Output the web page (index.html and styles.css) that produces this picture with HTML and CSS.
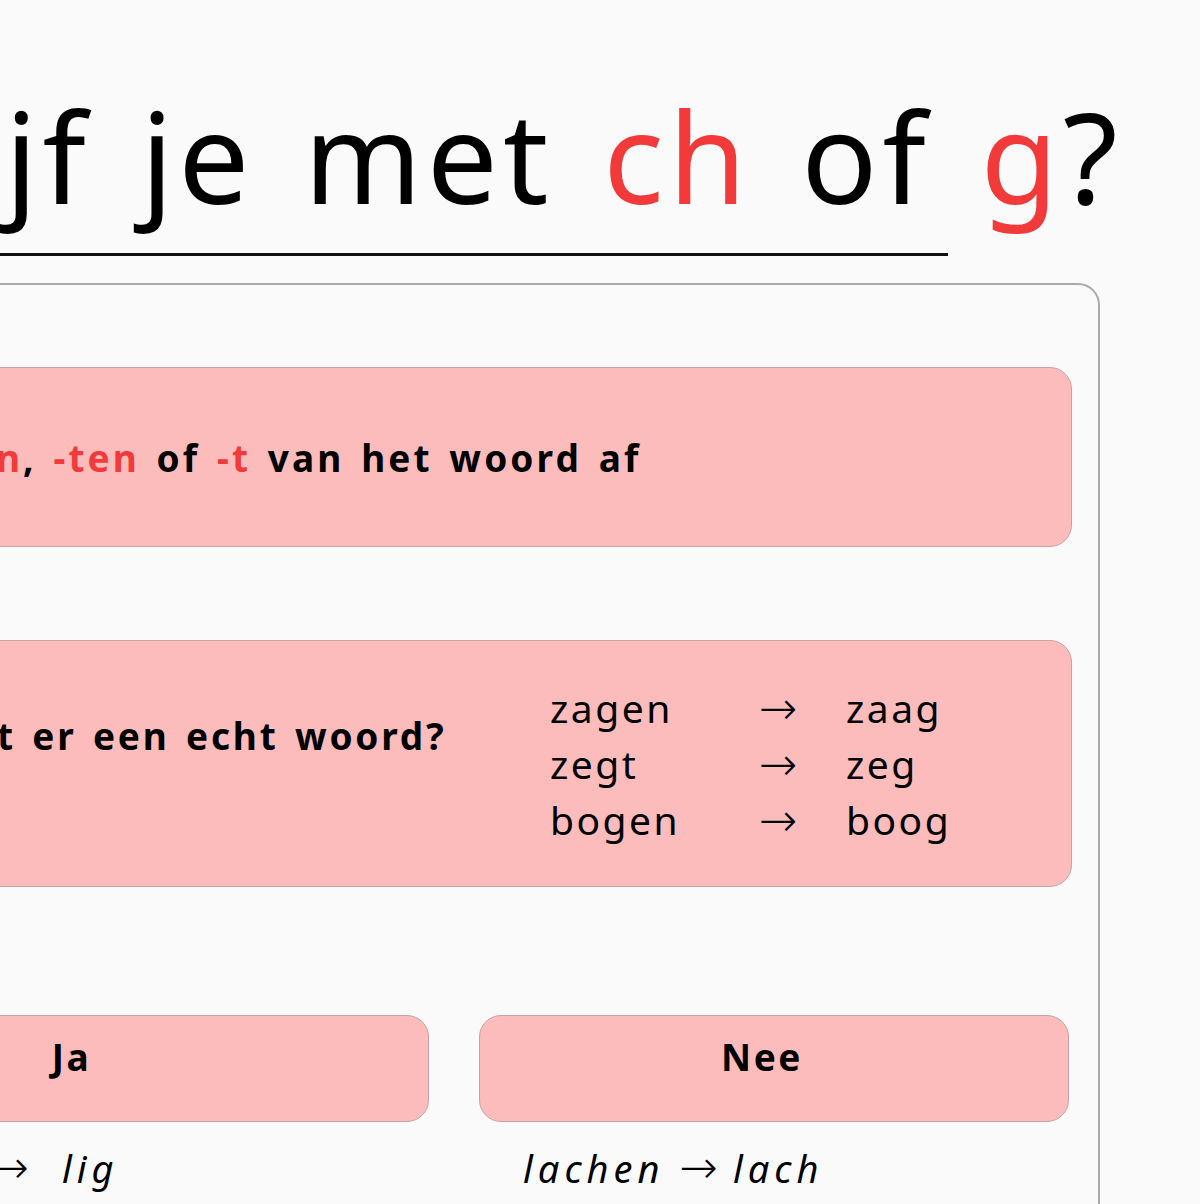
FILE: index.html
```html
<!DOCTYPE html>
<html lang="nl">
<head>
<meta charset="utf-8">
<title>Schrijf je met ch of g?</title>
<link rel="stylesheet" href="styles.css">
</head>
<body>
<div class="page">
  <h1 class="title">Schrijf je met <span class="red">ch</span> of <span class="red">g</span>?</h1>
  <section class="card">
    <div class="step step-one">
      <p class="step-text">Haal <span class="red">-en</span>, <span class="red">-ten</span> of <span class="red">-t</span> van het woord af</p>
    </div>
    <div class="step step-two">
      <p class="step-text step-question">Blijft er een echt woord?</p>
      <div class="examples">
        <span>zagen</span><span class="arrow">→</span><span>zaag</span>
        <span>zegt</span><span class="arrow">→</span><span>zeg</span>
        <span>bogen</span><span class="arrow">→</span><span>boog</span>
      </div>
    </div>
    <div class="answers">
      <div class="answer answer-yes">
        <div class="answer-btn">Ja</div>
        <p class="answer-example">liggen <span class="arrow-inline arrow-wide">→</span> lig</p>
      </div>
      <div class="answer answer-no">
        <div class="answer-btn">Nee</div>
        <p class="answer-example">lachen <span class="arrow-inline">→</span> lach</p>
      </div>
    </div>
  </section>
</div>
</body>
</html>
```

FILE: styles.css
```css
html, body {
  margin: 0;
  padding: 0;
  background: #fafafa;
  overflow: hidden;
}

body {
  font-family: "Noto Sans", "DejaVu Sans", sans-serif;
  color: #000;
}

.page {
  margin-left: -300px;
  width: 1400px;
  padding-top: 66px;
}

.red {
  color: #f23a3a;
}

.title {
  margin: 0;
  width: 1248px;
  padding-bottom: 9px;
  font-size: 126px;
  font-weight: 400;
  letter-spacing: 5px;
  word-spacing: 12px;
  line-height: 178px;
  white-space: nowrap;
  border-bottom: 3px solid #111;
  text-indent: -12px;
}

.card {
  margin-top: 27px;
  border: 2px solid #aaa;
  border-radius: 22px;
  padding: 82px 26px 60px 30px;
  min-height: 900px;
}

.step {
  background: #fbbcbb;
  border: 1px solid #c9a4a4;
  border-radius: 22px;
  display: flex;
  align-items: center;
}

.step-text {
  margin: 0;
  font-size: 37px;
  font-weight: 700;
  letter-spacing: 3.1px;
  word-spacing: 4px;
}

.step-one {
  height: 178px;
  padding-left: 110px;
}

.step-two {
  margin-top: 93px;
  height: 245px;
  padding-left: 178px;
}

.step-question {
  width: 639px;
  flex: none;
  padding-bottom: 56px;
  letter-spacing: 2.8px;
}

.examples {
  display: grid;
  grid-template-columns: 209px 87px auto;
  font-size: 39px;
  letter-spacing: 2.5px;
  line-height: 56px;
}

.arrow,
.arrow-inline {
  font-family: "DejaVu Sans ExtraLight", "DejaVu Sans", sans-serif;
  font-style: normal;
  font-weight: 200;
  letter-spacing: 0;
}

.arrow {
  font-size: 46px;
  line-height: 56px;
}

.arrow-inline {
  font-size: 46px;
  line-height: 0;
}

.arrow-wide {
  margin-right: 18px;
}

.answers {
  margin-top: 128px;
  display: flex;
  gap: 50px;
  margin-right: 3px;
}

.answer {
  display: flex;
  flex-direction: column;
}

.answer-yes {
  flex: 1;
}

.answer-no {
  width: 590px;
}

.answer-btn {
  height: 81px;
  padding-right: 24px;
  padding-bottom: 24px;
  background: #fbbcbb;
  border: 1px solid #c9a4a4;
  border-radius: 22px;
  font-size: 37px;
  font-weight: 700;
  letter-spacing: 2.5px;
  display: flex;
  align-items: center;
  justify-content: center;
}

.answer-yes .answer-btn {
  padding-right: 18px;
}

.answer-example {
  margin: 20px 0 0;
  font-size: 38px;
  line-height: 52px;
  font-style: italic;
  letter-spacing: 5px;
}

.answer-yes .answer-example {
  padding-left: 109px;
}

.answer-no .answer-example {
  padding-left: 44px;
}
```
